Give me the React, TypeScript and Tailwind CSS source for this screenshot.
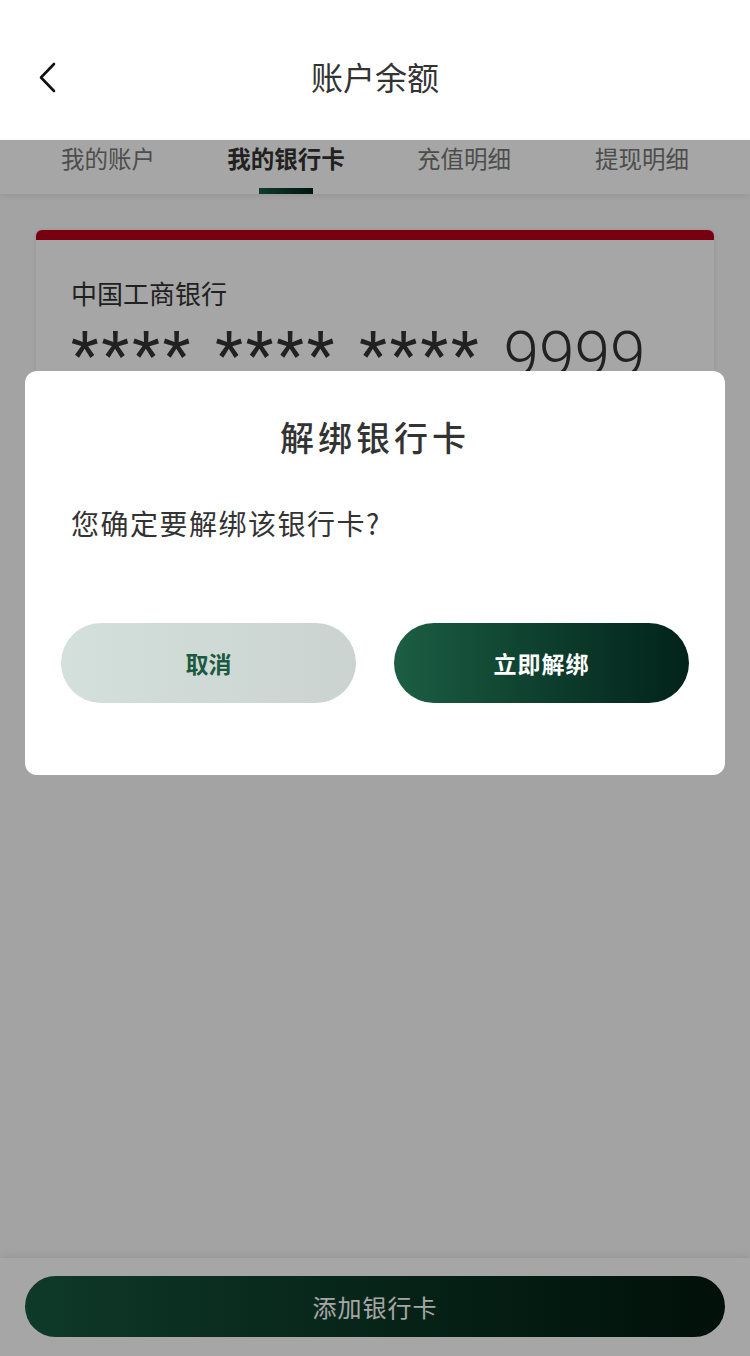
const TABS = ['我的账户', '我的银行卡', '充值明细', '提现明细']

const FONT = "font-['Noto_Sans_CJK_SC','Noto_Sans',sans-serif]"

export default function App() {
  const active = 1

  return (
    <div className={`relative w-[750px] h-[1356px] overflow-hidden bg-[#fafafa] ${FONT}`}>
      {/* Header */}
      <div className="relative h-[140px] bg-white flex items-center justify-center pt-[12px]">
        <svg
          className="absolute left-[36px] top-[60px]"
          width="24"
          height="34"
          viewBox="0 0 24 34"
          fill="none"
          stroke="#111"
          strokeWidth="2.6"
          strokeLinecap="round"
          strokeLinejoin="round"
        >
          <polyline points="18,4 5,17.5 18,31" />
        </svg>
        <h1 className="text-[32px] text-[#333] leading-none">账户余额</h1>
      </div>

      {/* Tabs */}
      <div className="relative h-[54px] bg-white shadow-[0_2px_6px_rgba(0,0,0,0.08)] px-[19px] grid grid-cols-4">
        {TABS.map((t, i) => (
          <div key={t} className="relative flex justify-center pt-[3px]">
            <span
              className={
                i === active
                  ? 'text-[23.5px] leading-[30px] font-bold text-[#333]'
                  : 'text-[23.5px] leading-[30px] text-[#777]'
              }
            >
              {t}
            </span>
            {i === active && (
              <div className="absolute bottom-0 w-[54px] h-[6px] bg-gradient-to-r from-[#1a5c42] to-[#04201a]" />
            )}
          </div>
        ))}
      </div>

      {/* Card list */}
      <div className="px-[36px] pt-[36px]">
        <div className="rounded-[6px] overflow-hidden bg-white shadow-[0_0_4px_rgba(0,0,0,0.1)]">
          <div className="h-[10px] bg-[#b8001a]" />
          <div className="px-[35px] pt-[36px] pb-[60px]">
            <div className="text-[26px] leading-[34px] text-[#333]">中国工商银行</div>
            <div className="mt-[8px] text-[64px] leading-[76px] text-[#333] whitespace-nowrap font-['Roboto',sans-serif]">
              <span className="font-normal tracking-[3px] [word-spacing:3px]">**** **** **** </span>
              <span className="font-light">9999</span>
            </div>
            <div className="mt-[20px] text-[22px] text-[#999]">储蓄卡</div>
          </div>
        </div>
      </div>

      {/* Bottom bar */}
      <div className="absolute left-0 right-0 bottom-0 h-[98px] bg-white shadow-[0_-2px_8px_rgba(0,0,0,0.08)] px-[25px] pt-[18px]">
        <button className="w-full h-[61px] rounded-full bg-gradient-to-r from-[#17593f] to-[#031a10] text-white text-[24px] tracking-[1px]">
          添加银行卡
        </button>
      </div>

      {/* Overlay */}
      <div className="absolute left-0 right-0 top-[140px] bottom-0 bg-black/35 px-[25px] pt-[231px]">
        <div className="bg-white rounded-[12px] px-[36px] pt-[44px] pb-[72px]">
          <h2 className="text-center text-[34px] leading-[44px] font-medium text-[#333] tracking-[4px]">解绑银行卡</h2>
          <p className="mt-[46px] px-[10px] text-[28px] leading-[36px] text-[#333] tracking-[1.5px]">您确定要解绑该银行卡?</p>
          <div className="mt-[82px] flex gap-[38px]">
            <button className="flex-1 h-[80px] rounded-full bg-gradient-to-r from-[#d3e0db] to-[#cbd3d0] text-[#1b5a41] text-[23px] font-bold">
              取消
            </button>
            <button className="flex-1 h-[80px] rounded-full bg-gradient-to-r from-[#1c5e44] to-[#03231a] text-white text-[23px] font-bold tracking-[1px]">
              立即解绑
            </button>
          </div>
        </div>
      </div>
    </div>
  )
}
